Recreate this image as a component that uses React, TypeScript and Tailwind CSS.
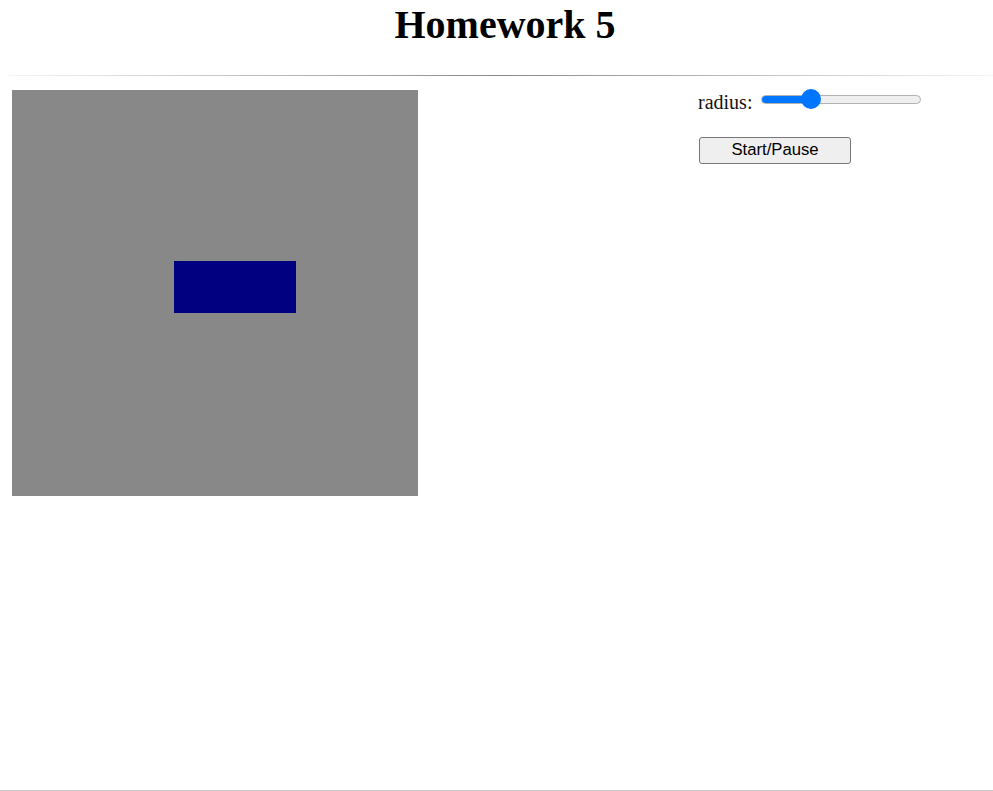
import React from 'react'

const RadiusSlider: React.FC<{ value: number }> = ({ value }) => {
  // value in 0..1, track is 160px wide, thumb 20px
  const fill = Math.round(value * 160)
  return (
    <div className="relative flex h-[20px] w-[160px] items-center">
      <div className="relative h-[9px] w-full overflow-hidden rounded-full border border-[#b2b2b2] bg-[#efefef]">
        <div className="absolute left-0 top-0 h-full bg-[#0075ff]" style={{ width: fill }}></div>
      </div>
      <div
        className="absolute top-0 h-[20px] w-[20px] rounded-full bg-[#0075ff]"
        style={{ left: fill - 10 }}></div>
    </div>
  )
}

const App: React.FC = () => {
  return (
    <div className="box-border h-[791px] w-full border-b border-[#c6c6c6] bg-white font-['Liberation_Serif',serif] text-black">
      {/* Heading */}
      <h1 className="pl-[17px] pt-[2px] text-center text-[40px] font-bold leading-[46px]">Homework 5</h1>

      <div className="ml-[8px] mt-[27px] h-px bg-[linear-gradient(to_right,rgba(136,136,136,0.08),#888888_50%,rgba(136,136,136,0.08))]"></div>

      {/* Content */}
      <div className="mt-[14px] flex">
        <div className="ml-[12px] h-[406px] w-[406px] shrink-0 bg-[#888888]">
          <svg width="406" height="406" viewBox="0 0 406 406">
            <rect x="162" y="171" width="122" height="52" fill="#000080" />
          </svg>
        </div>

        <div className="ml-[280px] flex flex-col items-start">
          <div className="flex items-start">
            <span className="mt-[1px] text-[20px] leading-[23px] text-[#111]">radius:</span>
            <div className="-mt-[1px] ml-[9px]">
              <RadiusSlider value={0.3125} />
            </div>
          </div>
          <button className="ml-[1px] mt-[23px] h-[27px] w-[152px] rounded-[3px] border border-[#767676] bg-[#efefef] font-['Liberation_Sans',Arial,sans-serif] text-[16.7px] leading-none text-black">
            Start/Pause
          </button>
        </div>
      </div>
    </div>
  )
}

export default App
